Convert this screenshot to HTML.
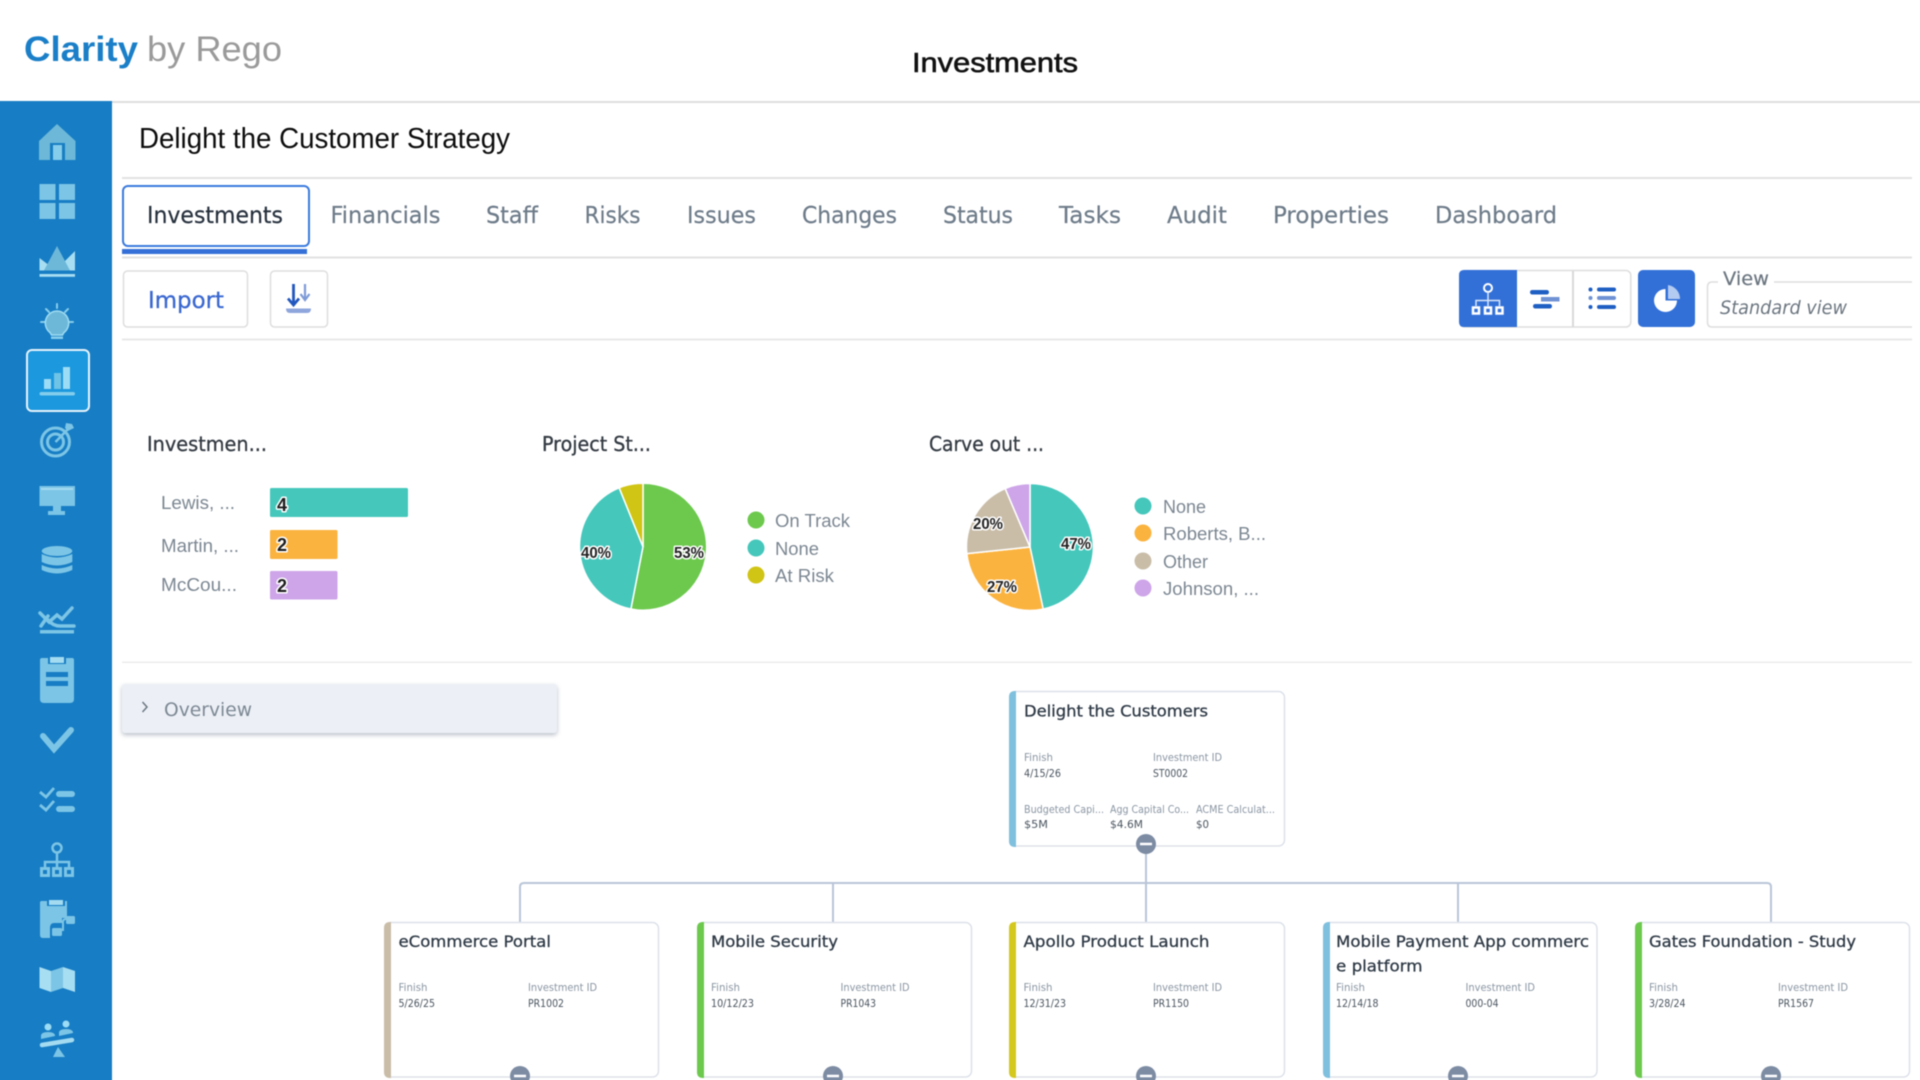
<!DOCTYPE html>
<html lang="en">
<head>
<meta charset="utf-8">
<title>Investments</title>
<style>
html,body{margin:0;padding:0;width:1920px;height:1080px;overflow:hidden;background:#fff}
body{position:relative}
svg{display:block;position:absolute;left:-10px;top:-10px;filter:blur(.4px)}
text{font-family:"DejaVu Sans","Liberation Sans",sans-serif}
.r{font-family:"Liberation Sans",Arial,sans-serif}
.tab{font-size:23px;fill:#6d7b89;stroke:#6d7b89;stroke-width:.2px}
.ttl{font-size:20px;fill:#333a42;stroke:#333a42;stroke-width:.3px}
.lg{font-family:"Liberation Sans",Arial,sans-serif;font-size:18px;fill:#7c8792}
.nm{font-family:"Liberation Sans",Arial,sans-serif;font-size:18px;font-weight:bold;fill:#1d1d1d;stroke:#fff;stroke-width:3px;paint-order:stroke;stroke-linejoin:round}
.pc{font-family:"Liberation Sans",Arial,sans-serif;font-size:15.5px;font-weight:bold;fill:#222;stroke:#fff;stroke-width:3px;paint-order:stroke;stroke-linejoin:round}
.ct{font-size:16px;fill:#2f3a46;stroke:#2f3a46;stroke-width:.3px}
.sl{font-size:10.5px;fill:#8a96a3}
.sv{font-size:10.5px;fill:#4a5560}
.card{fill:#fff;stroke:#dde2ea;stroke-width:1.5}
.conn{fill:none;stroke:#b9c5d8;stroke-width:2}
.col{fill:#7d8ca3}
.minus{stroke:#fff;stroke-width:2.5}
</style>
</head>
<body>
<svg xmlns="http://www.w3.org/2000/svg" width="1940" height="1100" viewBox="-10 -10 1940 1100">
<defs>
<filter id="sh" x="-5%" y="-30%" width="110%" height="170%"><feGaussianBlur stdDeviation="2.5"/></filter>
</defs>
<rect x="-10" y="-10" width="1940" height="1100" fill="#fff"/>

<!-- Header -->
<text class="r" x="24" y="61" font-size="35" font-weight="bold" fill="#1a7fc8" textLength="114" lengthAdjust="spacingAndGlyphs">Clarity</text>
<text class="r" x="147" y="61" font-size="35" fill="#9a9a9a" textLength="135" lengthAdjust="spacingAndGlyphs">by Rego</text>
<text class="r" x="912" y="72" font-size="27.500" fill="#111" stroke="#111" stroke-width=".6" textLength="166" lengthAdjust="spacingAndGlyphs">Investments</text>
<rect x="-10" y="101" width="1940" height="2" fill="#dedede"/>

<!-- Sidebar -->
<rect x="-10" y="101" width="122" height="989" fill="#177dc4"/>
<rect x="27" y="350" width="62" height="61" rx="5" fill="#1b98de" stroke="#e6f3fb" stroke-width="2"/>

<!-- home -->
<path d="M57 124 L75.500 141 V160 H65 V143 H50 V160 H39 V141 Z" fill="#6db8d9"/>
<rect x="53" y="145" width="9" height="15" fill="#86cdec"/>
<!-- grid -->
<g fill="#7cc5e6"><rect x="39.500" y="184" width="16" height="16"/><rect x="59" y="184" width="16" height="16"/><rect x="39.500" y="203" width="16" height="16"/><rect x="59" y="203" width="16" height="16"/></g>
<!-- mountains -->
<path d="M39.500 258 L50 266 L44 270.500 H70 L63 263 L75 251 V270.500 H39.500 Z" fill="#a8def2"/>
<path d="M44 270.500 L57 246 L70 270.500 Z" fill="#6db8d9"/>
<rect x="39.500" y="274" width="35.500" height="2.800" fill="#a8def2"/>
<!-- bulb -->
<g stroke="#86cdec" stroke-width="2" fill="none" stroke-linecap="round">
<path d="M57 304 V308 M46 309 L49 312 M68 309 L65 312 M41 322 H45 M69 322 H73"/>
</g>
<path d="M57 311 a12 12 0 0 1 7 21.500 l-1.500 2.500 h-11 l-1.500-2.500 A12 12 0 0 1 57 311 Z" fill="#6db8d9" stroke="#9fdcf2" stroke-width="1.500"/>
<rect x="51" y="336.500" width="12" height="2.500" fill="#86cdec"/>
<!-- bar chart -->
<rect x="44" y="379" width="7" height="10" fill="#9cdcf4"/><rect x="54" y="373" width="7" height="16" fill="#6fc4e6"/><rect x="63" y="367" width="7" height="22" fill="#9cdcf4"/>
<rect x="39.500" y="392" width="35.500" height="3.500" rx="1.700" fill="#82cdec"/>
<!-- target -->
<circle cx="55.500" cy="442" r="14" fill="none" stroke="#7cc5e6" stroke-width="3"/>
<circle cx="55.500" cy="442" r="8" fill="none" stroke="#7cc5e6" stroke-width="3"/>
<path d="M55.500 442 L68 429" stroke="#7cc5e6" stroke-width="2.500"/>
<path d="M66 423 L72 424 L74 428 L68 431 L65 428 Z" fill="#7cc5e6"/>
<!-- monitor -->
<path d="M39.500 486 H75 V506 H61 V511 H65 V515 H48 V511 H53 V506 H39.500 Z" fill="#7cc5e6"/>
<rect x="41" y="488" width="32" height="2" fill="#a4dbf1"/>
<!-- database -->
<ellipse cx="57" cy="551" rx="15.300" ry="5" fill="#7cc5e6"/>
<path d="M41.700 554 Q57 561 72.300 554 V562 Q57 569 41.700 562 Z M41.700 565 Q57 572 72.300 565 V570 Q57 577 41.700 570 Z" fill="#7cc5e6"/>
<!-- trend -->
<path d="M40 613 L49 622 L57 615 L62 619 L72 608" fill="none" stroke="#7cc5e6" stroke-width="3.500" stroke-linecap="round"/>
<path d="M41 626 L48 616" stroke="#7cc5e6" stroke-width="3.500" stroke-linecap="round"/>
<path d="M48 620 Q53 626 60 626 H74" fill="none" stroke="#7cc5e6" stroke-width="3.500" stroke-linecap="round"/>
<rect x="40" y="630" width="34" height="3.500" fill="#7cc5e6"/>
<!-- clipboard -->
<path d="M42 658 H48 V664 H66 V658 H72 Q74 658 74 660 V699 Q74 703 70 703 H44 Q40 703 40 699 V660 Q40 658 42 658 Z" fill="#7cc5e6"/>
<rect x="50" y="657" width="14" height="6" fill="#a4dbf1"/>
<rect x="46" y="672" width="22" height="5" fill="#177dc4"/><rect x="46" y="681" width="22" height="5" fill="#177dc4"/>
<!-- check -->
<path d="M43 736 L54 749 L71 730" fill="none" stroke="#7cc5e6" stroke-width="6" stroke-linecap="round"/>
<!-- checklist -->
<path d="M40 792 L46 797 L54 788 M40 805 L46 810 L54 801" fill="none" stroke="#7cc5e6" stroke-width="2.800"/>
<rect x="56" y="791" width="19" height="6" rx="3" fill="#7cc5e6"/><rect x="56" y="806" width="19" height="6" rx="3" fill="#7cc5e6"/>
<!-- org -->
<circle cx="57" cy="848" r="4.500" fill="none" stroke="#7cc5e6" stroke-width="2.500"/>
<path d="M57 853 V868 M45 868 V862 H69 V868" fill="none" stroke="#7cc5e6" stroke-width="2.500"/>
<g fill="none" stroke="#7cc5e6" stroke-width="3"><rect x="41.500" y="868.500" width="7" height="7"/><rect x="53.500" y="868.500" width="7" height="7"/><rect x="65.500" y="868.500" width="7" height="7"/></g>
<!-- clipboard flow -->
<path d="M41 901 H47 V906 H65 V901 H67 V918 H62 V923 H54 Q50 923 50 928 V938 H43 Q40 938 40 935 V902 Z" fill="#7cc5e6"/>
<rect x="49" y="900" width="14" height="5" fill="#a4dbf1"/>
<path d="M60 930 H63 V922 Q63 919 66 919 H67" fill="none" stroke="#7cc5e6" stroke-width="2"/>
<rect x="52" y="928" width="10" height="8" rx="1.500" fill="#7cc5e6"/>
<rect x="66" y="916" width="9" height="8" rx="1.500" fill="#7cc5e6"/>
<!-- map -->
<path d="M39.500 967 L51 971 V992 L39.500 988 Z" fill="#a8def2"/>
<path d="M51 971 L63 967 V988 L51 992 Z" fill="#7cc5e6"/>
<path d="M63 967 L75 971 V992 L63 988 Z" fill="#a8def2"/>
<!-- balance -->
<circle cx="48" cy="1027" r="3.500" fill="#9cdcf4"/><circle cx="66" cy="1024" r="3.500" fill="#9cdcf4"/>
<path d="M41 1039 V1035 Q42 1032 48 1032 Q54 1032 55 1035 V1036 Z M59 1036 V1032 Q60 1029 66 1029 Q72 1029 73 1032 V1033 Z" fill="#7cc5e6"/>
<path d="M42 1045 L72 1040" stroke="#a4dbf1" stroke-width="4.500" stroke-linecap="round"/>
<path d="M53 1057 L58 1047 L65 1057 Z" fill="#7cc5e6"/>

<!-- Title -->
<text class="r" x="139" y="148" font-size="28.500" fill="#0d0d0d" textLength="371" lengthAdjust="spacingAndGlyphs">Delight the Customer Strategy</text>
<rect x="122" y="177" width="1790" height="2" fill="#e2e2e2"/>

<!-- Tabs -->
<rect x="123" y="186" width="186" height="60" rx="5" fill="#fff" stroke="#3a7ade" stroke-width="2"/>
<rect x="122" y="249" width="185" height="5" fill="#3470d8"/>
<rect x="122" y="256.500" width="1790" height="2" fill="#e2e2e2"/>
<text class="tab" style="fill:#26303d;stroke:#26303d" x="147" y="223" textLength="136" lengthAdjust="spacingAndGlyphs">Investments</text>
<text class="tab" x="330.500" y="223" textLength="110" lengthAdjust="spacingAndGlyphs">Financials</text>
<text class="tab" x="486" y="223" textLength="52" lengthAdjust="spacingAndGlyphs">Staff</text>
<text class="tab" x="584.500" y="223" textLength="56" lengthAdjust="spacingAndGlyphs">Risks</text>
<text class="tab" x="687" y="223" textLength="69" lengthAdjust="spacingAndGlyphs">Issues</text>
<text class="tab" x="802" y="223" textLength="95" lengthAdjust="spacingAndGlyphs">Changes</text>
<text class="tab" x="943" y="223" textLength="70" lengthAdjust="spacingAndGlyphs">Status</text>
<text class="tab" x="1059" y="223" textLength="62" lengthAdjust="spacingAndGlyphs">Tasks</text>
<text class="tab" x="1167" y="223" textLength="60" lengthAdjust="spacingAndGlyphs">Audit</text>
<text class="tab" x="1273" y="223" textLength="116" lengthAdjust="spacingAndGlyphs">Properties</text>
<text class="tab" x="1435" y="223" textLength="122" lengthAdjust="spacingAndGlyphs">Dashboard</text>

<!-- Toolbar left -->
<rect x="123.500" y="271" width="124" height="56" rx="4" fill="#fff" stroke="#dedede" stroke-width="1.500"/>
<text x="148" y="308" font-size="23" fill="#3a68d0" stroke="#3a68d0" stroke-width=".3" textLength="76" lengthAdjust="spacingAndGlyphs">Import</text>
<rect x="270.500" y="271" width="57" height="56" rx="4" fill="#fff" stroke="#dedede" stroke-width="1.500"/>
<path d="M293.500 284 V304 M288 298.500 L293.500 305 L299 298.500" fill="none" stroke="#2257c0" stroke-width="2.800"/>
<path d="M305 284 V299 M300.500 294 L305 300 L309.500 294" fill="none" stroke="#7e9bd8" stroke-width="2.200"/>
<path d="M286 308.500 H311 Q311 313 307 313 H290 Q286 313 286 308.500 Z" fill="#8ea6dc"/>
<rect x="122" y="338.500" width="1790" height="2" fill="#e8e8e8"/>

<!-- Toolbar right -->
<rect x="1459.800" y="270.500" width="171" height="56.500" rx="5" fill="#fff" stroke="#dedede" stroke-width="1.500"/>
<path d="M1464 270 H1517 V327 H1464 Q1459 327 1459 322 V275 Q1459 270 1464 270 Z" fill="#3270d8"/>
<rect x="1572" y="271" width="2" height="56" fill="#d9d9d9"/>
<circle cx="1488" cy="288" r="4" fill="none" stroke="#fff" stroke-width="2"/>
<path d="M1488 292 V306 M1476 306 V300.500 H1499.500 V306" fill="none" stroke="#d9e5fb" stroke-width="1.500"/>
<g fill="none" stroke="#fff" stroke-width="2.500"><rect x="1473" y="307.500" width="6" height="6"/><rect x="1485" y="307.500" width="6" height="6"/><rect x="1496.500" y="307.500" width="6" height="6"/></g>
<rect x="1530" y="290" width="19" height="4.500" rx="2.200" fill="#1f5fc4"/>
<rect x="1541" y="297" width="18.500" height="4.500" fill="#6f92d4"/>
<rect x="1533" y="304" width="19" height="4.500" rx="2.200" fill="#1f5fc4"/>
<g fill="#1f5fc4"><circle cx="1590.500" cy="289.500" r="2"/><circle cx="1590.500" cy="298" r="2" fill="#6f92d4"/><circle cx="1590.500" cy="307" r="2"/><rect x="1597" y="287.500" width="19" height="4" rx="2"/><rect x="1597" y="296" width="19" height="4" rx="2" fill="#6f92d4"/><rect x="1597" y="305" width="19" height="4" rx="2"/></g>
<rect x="1638" y="270" width="57" height="57" rx="5" fill="#3270d8"/>
<path d="M1665.500 300.500 V289 A11.500 11.500 0 1 0 1677 300.500 Z" fill="#fff"/>
<path d="M1668 285 A14 14 0 0 1 1680 299 H1668 Z" fill="#b3caf1"/>
<path d="M1772 282 H1712 Q1707.500 282 1707.500 287 V322 Q1707.500 327 1712 327 H1912 M1772 282 H1912" fill="none" stroke="#dedede" stroke-width="1.500"/>
<rect x="1718" y="272" width="56" height="16" fill="#fff"/>
<text x="1723" y="285" font-size="19" fill="#6c7680" stroke="#6c7680" stroke-width=".2" textLength="46" lengthAdjust="spacingAndGlyphs">View</text>
<text x="1720" y="314" font-size="19" font-style="italic" fill="#6c7680" textLength="127" lengthAdjust="spacingAndGlyphs">Standard view</text>

<!-- Chart titles -->
<text class="ttl" x="147" y="451" textLength="120" lengthAdjust="spacingAndGlyphs">Investmen...</text>
<text class="ttl" x="542" y="451" textLength="109" lengthAdjust="spacingAndGlyphs">Project St...</text>
<text class="ttl" x="929" y="451" textLength="115" lengthAdjust="spacingAndGlyphs">Carve out ...</text>

<!-- Bars -->
<text class="lg" x="161" y="509" textLength="74" lengthAdjust="spacingAndGlyphs">Lewis, ...</text>
<text class="lg" x="161" y="552" textLength="78" lengthAdjust="spacingAndGlyphs">Martin, ...</text>
<text class="lg" x="161" y="591" textLength="76" lengthAdjust="spacingAndGlyphs">McCou...</text>
<rect x="270" y="488" width="138" height="29" rx="1.500" fill="#45c7bb"/>
<rect x="270" y="530" width="67.500" height="29" rx="1.500" fill="#fbb33f"/>
<rect x="270" y="571" width="67.500" height="28.500" rx="1.500" fill="#cda5e8"/>
<text class="nm" x="282" y="511" text-anchor="middle">4</text>
<text class="nm" x="282" y="551" text-anchor="middle">2</text>
<text class="nm" x="282" y="592" text-anchor="middle">2</text>

<!-- Pie 1 -->
<g stroke="#fff" stroke-width="1.500" stroke-linejoin="round">
<path d="M643 546.700 L643 483.200 A63.500 63.500 0 1 1 630.900 609 Z" fill="#6cc94d"/>
<path d="M643 546.700 L630.900 609 A63.500 63.500 0 0 1 619.200 487.800 Z" fill="#45c7bb"/>
<path d="M643 546.700 L619.200 487.800 A63.500 63.500 0 0 1 643 483.200 Z" fill="#d0c414"/>
</g>
<text class="pc" x="674" y="558" textLength="30" lengthAdjust="spacingAndGlyphs">53%</text>
<text class="pc" x="581" y="558" textLength="30" lengthAdjust="spacingAndGlyphs">40%</text>
<circle cx="756" cy="520" r="8.500" fill="#6cc94d"/><circle cx="756" cy="548" r="8.500" fill="#45c7bb"/><circle cx="756" cy="575" r="8.500" fill="#d0c414"/>
<text class="lg" x="775" y="527" textLength="75" lengthAdjust="spacingAndGlyphs">On Track</text>
<text class="lg" x="775" y="555" textLength="44" lengthAdjust="spacingAndGlyphs">None</text>
<text class="lg" x="775" y="582" textLength="59" lengthAdjust="spacingAndGlyphs">At Risk</text>

<!-- Pie 2 -->
<g stroke="#fff" stroke-width="1.500" stroke-linejoin="round">
<path d="M1030 547 L1030 483.500 A63.500 63.500 0 0 1 1043.200 609.100 Z" fill="#45c7bb"/>
<path d="M1030 547 L1043.200 609.100 A63.500 63.500 0 0 1 966.800 553.600 Z" fill="#fbb33f"/>
<path d="M1030 547 L966.800 553.600 A63.500 63.500 0 0 1 1005.200 488.500 Z" fill="#c9bda8"/>
<path d="M1030 547 L1005.200 488.500 A63.500 63.500 0 0 1 1030 483.500 Z" fill="#cda5e8"/>
</g>
<text class="pc" x="1061" y="549" textLength="30" lengthAdjust="spacingAndGlyphs">47%</text>
<text class="pc" x="973" y="529" textLength="30" lengthAdjust="spacingAndGlyphs">20%</text>
<text class="pc" x="987" y="592" textLength="30" lengthAdjust="spacingAndGlyphs">27%</text>
<circle cx="1143" cy="506" r="8.500" fill="#45c7bb"/><circle cx="1143" cy="533" r="8.500" fill="#fbb33f"/><circle cx="1143" cy="561" r="8.500" fill="#c9bda8"/><circle cx="1143" cy="588" r="8.500" fill="#cda5e8"/>
<text class="lg" x="1163" y="513" textLength="43" lengthAdjust="spacingAndGlyphs">None</text>
<text class="lg" x="1163" y="540" textLength="103" lengthAdjust="spacingAndGlyphs">Roberts, B...</text>
<text class="lg" x="1163" y="568" textLength="45" lengthAdjust="spacingAndGlyphs">Other</text>
<text class="lg" x="1163" y="595" textLength="96" lengthAdjust="spacingAndGlyphs">Johnson, ...</text>

<rect x="122" y="661.500" width="1790" height="1.500" fill="#ececec"/>

<!-- Overview -->
<rect x="122" y="686" width="435" height="49" rx="3" fill="#b9bfc9" filter="url(#sh)"/>
<rect x="122" y="684" width="435" height="49" rx="3" fill="#ecf0f6"/>
<path d="M142.500 702 L147 707 L142.500 712" fill="none" stroke="#6c7680" stroke-width="1.500"/>
<text x="164" y="716" font-size="19" fill="#7d8894" textLength="88" lengthAdjust="spacingAndGlyphs">Overview</text>

<!-- Connectors -->
<path class="conn" d="M1146 846 V922 M520 922 V887 Q520 883 524 883 H1767 Q1771 883 1771 887 V922 M833 883 V922 M1458 883 V922"/>

<!-- Root card -->
<rect class="card" x="1010" y="691.500" width="274.500" height="154.500" rx="6"/>
<path d="M1015 691 H1016 V847 H1015 Q1009 847 1009 841 V697 Q1009 691 1015 691 Z" fill="#7fc0de"/>
<text class="ct" x="1024" y="716.500" textLength="184" lengthAdjust="spacingAndGlyphs">Delight the Customers</text>
<text class="sl" x="1024" y="761" textLength="29" lengthAdjust="spacingAndGlyphs">Finish</text>
<text class="sl" x="1153" y="761" textLength="69" lengthAdjust="spacingAndGlyphs">Investment ID</text>
<text class="sv" x="1024" y="777" textLength="37" lengthAdjust="spacingAndGlyphs">4/15/26</text>
<text class="sv" x="1153" y="777" textLength="35" lengthAdjust="spacingAndGlyphs">ST0002</text>
<text class="sl" x="1024" y="813" textLength="80" lengthAdjust="spacingAndGlyphs">Budgeted Capi...</text>
<text class="sl" x="1110" y="813" textLength="79" lengthAdjust="spacingAndGlyphs">Agg Capital Co...</text>
<text class="sl" x="1196" y="813" textLength="79" lengthAdjust="spacingAndGlyphs">ACME Calculat...</text>
<text class="sv" x="1024" y="828" textLength="24" lengthAdjust="spacingAndGlyphs">$5M</text>
<text class="sv" x="1110" y="828" textLength="33" lengthAdjust="spacingAndGlyphs">$4.6M</text>
<text class="sv" x="1196" y="828" textLength="13" lengthAdjust="spacingAndGlyphs">$0</text>
<circle class="col" cx="1146" cy="844" r="10"/><path class="minus" d="M1140 844 H1152"/>

<!-- Card 1 -->
<rect class="card" x="385" y="922.500" width="273.500" height="154.500" rx="6"/>
<path d="M390 922 H391 V1078 H390 Q384 1078 384 1072 V928 Q384 922 390 922 Z" fill="#c9bda8"/>
<text class="ct" x="398.500" y="947" textLength="152.500" lengthAdjust="spacingAndGlyphs">eCommerce Portal</text>
<text class="sl" x="398.500" y="991" textLength="29" lengthAdjust="spacingAndGlyphs">Finish</text>
<text class="sl" x="528" y="991" textLength="69" lengthAdjust="spacingAndGlyphs">Investment ID</text>
<text class="sv" x="398.500" y="1007" textLength="36.500" lengthAdjust="spacingAndGlyphs">5/26/25</text>
<text class="sv" x="528" y="1007" textLength="36" lengthAdjust="spacingAndGlyphs">PR1002</text>
<circle class="col" cx="520" cy="1076" r="10"/><path class="minus" d="M514 1076 H526"/>

<!-- Card 2 -->
<rect class="card" x="698" y="922.500" width="273.500" height="154.500" rx="6"/>
<path d="M703 922 H704 V1078 H703 Q697 1078 697 1072 V928 Q697 922 703 922 Z" fill="#6cc94d"/>
<text class="ct" x="711" y="947" textLength="127" lengthAdjust="spacingAndGlyphs">Mobile Security</text>
<text class="sl" x="711" y="991" textLength="29" lengthAdjust="spacingAndGlyphs">Finish</text>
<text class="sl" x="840.500" y="991" textLength="69" lengthAdjust="spacingAndGlyphs">Investment ID</text>
<text class="sv" x="711" y="1007" textLength="43" lengthAdjust="spacingAndGlyphs">10/12/23</text>
<text class="sv" x="840.500" y="1007" textLength="35.500" lengthAdjust="spacingAndGlyphs">PR1043</text>
<circle class="col" cx="833" cy="1076" r="10"/><path class="minus" d="M827 1076 H839"/>

<!-- Card 3 -->
<rect class="card" x="1010" y="922.500" width="274.500" height="154.500" rx="6"/>
<path d="M1015 922 H1016 V1078 H1015 Q1009 1078 1009 1072 V928 Q1009 922 1015 922 Z" fill="#d4c81e"/>
<text class="ct" x="1023.500" y="947" textLength="186" lengthAdjust="spacingAndGlyphs">Apollo Product Launch</text>
<text class="sl" x="1023.500" y="991" textLength="29" lengthAdjust="spacingAndGlyphs">Finish</text>
<text class="sl" x="1153" y="991" textLength="69" lengthAdjust="spacingAndGlyphs">Investment ID</text>
<text class="sv" x="1023.500" y="1007" textLength="42.500" lengthAdjust="spacingAndGlyphs">12/31/23</text>
<text class="sv" x="1153" y="1007" textLength="36" lengthAdjust="spacingAndGlyphs">PR1150</text>
<circle class="col" cx="1146" cy="1076" r="10"/><path class="minus" d="M1140 1076 H1152"/>

<!-- Card 4 -->
<rect class="card" x="1324" y="922.500" width="273" height="154.500" rx="6"/>
<path d="M1329 922 H1330 V1078 H1329 Q1323 1078 1323 1072 V928 Q1323 922 1329 922 Z" fill="#7fc0de"/>
<text class="ct" x="1336" y="947" textLength="253" lengthAdjust="spacingAndGlyphs">Mobile Payment App commerc</text>
<text class="ct" x="1336" y="971.500" textLength="86.500" lengthAdjust="spacingAndGlyphs">e platform</text>
<text class="sl" x="1336" y="991" textLength="29" lengthAdjust="spacingAndGlyphs">Finish</text>
<text class="sl" x="1465.500" y="991" textLength="69.500" lengthAdjust="spacingAndGlyphs">Investment ID</text>
<text class="sv" x="1336" y="1007" textLength="42.500" lengthAdjust="spacingAndGlyphs">12/14/18</text>
<text class="sv" x="1465.500" y="1007" textLength="33" lengthAdjust="spacingAndGlyphs">000-04</text>
<circle class="col" cx="1458" cy="1076" r="10"/><path class="minus" d="M1452 1076 H1464"/>

<!-- Card 5 -->
<rect class="card" x="1636" y="922.500" width="273.500" height="154.500" rx="6"/>
<path d="M1641 922 H1642 V1078 H1641 Q1635 1078 1635 1072 V928 Q1635 922 1641 922 Z" fill="#6cc94d"/>
<text class="ct" x="1649" y="947" textLength="207" lengthAdjust="spacingAndGlyphs">Gates Foundation - Study</text>
<text class="sl" x="1649" y="991" textLength="29" lengthAdjust="spacingAndGlyphs">Finish</text>
<text class="sl" x="1778" y="991" textLength="70" lengthAdjust="spacingAndGlyphs">Investment ID</text>
<text class="sv" x="1649" y="1007" textLength="36.500" lengthAdjust="spacingAndGlyphs">3/28/24</text>
<text class="sv" x="1778" y="1007" textLength="36" lengthAdjust="spacingAndGlyphs">PR1567</text>
<circle class="col" cx="1771" cy="1076" r="10"/><path class="minus" d="M1765 1076 H1777"/>
</svg>
</body>
</html>
